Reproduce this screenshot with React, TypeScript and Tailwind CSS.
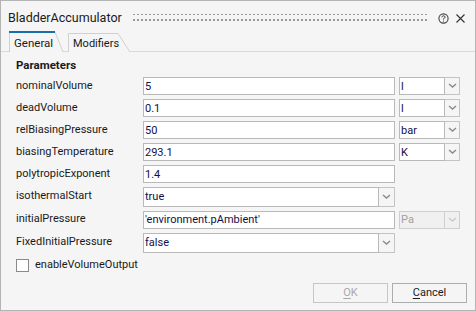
import React from "react";

const Chevron = ({ muted = false }: { muted?: boolean }) => (
  <svg width="9" height="6" viewBox="0 0 9 6" className="block">
    <path
      d="M1 1 L4.5 4 L8 1"
      fill="none"
      stroke={muted ? "#c8c8c8" : "#8a8a8a"}
      strokeWidth="1.4"
    />
  </svg>
);

const TextBox = ({ value }: { value: string }) => (
  <div className="w-[252px] h-[18px] border border-[#b9b9b9] bg-white flex items-center pl-[1px] text-[#10104a] leading-none">
    {value}
  </div>
);

const Unit = ({ value, disabled = false }: { value: string; disabled?: boolean }) => (
  <div className="ml-[4px] flex h-[18px]">
    <div
      className={
        disabled
          ? "w-[46px] border border-[#cfcfcf] bg-[#f0f0f0] text-[#a0a0a0] flex items-center pl-[1px] leading-none"
          : "w-[46px] border border-[#b9b9b9] bg-white text-[#10104a] flex items-center pl-[1px] leading-none"
      }
    >
      {value}
    </div>
    <div
      className={
        disabled
          ? "w-[15px] border border-l-0 border-[#cfcfcf] bg-[#f0f0f0] flex items-center justify-center"
          : "w-[15px] border border-l-0 border-[#c4c4c4] bg-[#f5f5f5] flex items-center justify-center"
      }
    >
      <Chevron muted={disabled} />
    </div>
  </div>
);

const Combo = ({ value }: { value: string }) => (
  <div className="flex h-[20px] w-[252px]">
    <div className="flex-1 border border-[#b9b9b9] bg-white flex items-center pl-[1px] text-[#10104a] leading-none">
      {value}
    </div>
    <div className="w-[16px] border border-l-0 border-[#c4c4c4] bg-[#f5f5f5] flex items-center justify-center">
      <Chevron />
    </div>
  </div>
);

const Row = ({
  label,
  children,
  tall = false,
}: {
  label: string;
  children: React.ReactNode;
  tall?: boolean;
}) => (
  <div className={tall ? "flex items-center h-[23px]" : "flex items-center h-[22px]"}>
    <div className="w-[127px] text-[#1a1a1a]">{label}</div>
    {children}
  </div>
);

export default function App() {
  return (
    <div className="w-[476px] h-[311px] border border-[#b4b4b4] bg-[#f5f5f5] flex flex-col text-[11px] font-['Roboto','Noto_Sans',sans-serif] select-none overflow-hidden">
      {/* title bar */}
      <div className="h-[30px] flex items-center pl-[7px] pr-[9px] shrink-0">
        <span className="text-[12.5px] text-[#1a1a1a] pt-[4px] w-[112px]">BladderAccumulator</span>
        <svg width="296" height="10" className="ml-[13px] mt-[4px] shrink-0">
          <defs>
            <pattern id="grip" width="4" height="6" patternUnits="userSpaceOnUse">
              <rect x="0" y="0" width="2" height="2" fill="#9a9a9a" />
            </pattern>
          </defs>
          <rect x="0" y="1" width="296" height="8" fill="url(#grip)" />
        </svg>
        <div className="ml-auto flex items-center gap-[6px] pt-[4px]">
          <svg width="11" height="11" viewBox="0 0 11 11">
            <circle cx="5.5" cy="5.5" r="4.6" fill="none" stroke="#444" strokeWidth="1.1" />
            <path d="M3.9 4.3 Q3.9 2.8 5.5 2.8 Q7.1 2.8 7.1 4.2 Q7.1 5.1 5.5 5.6 L5.5 6.6" fill="none" stroke="#444" strokeWidth="1" />
            <circle cx="5.5" cy="8.1" r="0.6" fill="#444" />
          </svg>
          <svg width="11" height="11" viewBox="0 0 11 11">
            <path d="M1.5 1.5 L9.5 9.5 M9.5 1.5 L1.5 9.5" stroke="#333" strokeWidth="1.1" />
          </svg>
        </div>
      </div>

      {/* tabs */}
      <div className="h-[21px] flex items-end shrink-0 relative">
        <div className="absolute left-0 right-0 bottom-0 h-px bg-[#d9d9d9]" />
        <div className="relative ml-[8px] h-[21px] w-[55px] z-10">
          <svg width="55" height="21" className="absolute inset-0">
            <path d="M0.5 21 L0.5 1 L46 1 L54 21" fill="#f5f5f5" stroke="#d0d0d0" />
            <rect x="0" y="0" width="46" height="2" fill="#1a6ea8" />
          </svg>
          <span className="relative block pl-[5px] pt-[4px] text-[11.5px] text-[#1a1a1a]">General</span>
        </div>
        <div className="relative ml-[4px] h-[19px] w-[64px]">
          <svg width="64" height="19" className="absolute inset-0">
            <path d="M0.5 19 L0.5 0.5 L50 0.5 L62 19" fill="#f5f5f5" stroke="#d0d0d0" />
          </svg>
          <span className="relative block pl-[5px] pt-[3px] text-[11px] text-[#1a1a1a]">Modifiers</span>
        </div>
      </div>

      {/* content */}
      <div className="flex-1 flex flex-col pl-[15px]">
        <div className="h-[22px] flex items-end font-bold text-[#1a1a1a] text-[11.5px]">Parameters</div>
        <div className="h-[1px]" />
        <Row label="nominalVolume">
          <TextBox value="5" />
          <Unit value="l" />
        </Row>
        <Row label="deadVolume">
          <TextBox value="0.1" />
          <Unit value="l" />
        </Row>
        <Row label="relBiasingPressure">
          <TextBox value="50" />
          <Unit value="bar" />
        </Row>
        <Row label="biasingTemperature">
          <TextBox value="293.1" />
          <Unit value="K" />
        </Row>
        <Row label="polytropicExponent">
          <TextBox value="1.4" />
        </Row>
        <Row label="isothermalStart" tall>
          <Combo value="true" />
        </Row>
        <Row label="initialPressure" tall>
          <TextBox value="'environment.pAmbient'" />
          <Unit value="Pa" disabled />
        </Row>
        <Row label="FixedInitialPressure" tall>
          <Combo value="false" />
        </Row>
        <div className="flex items-center h-[22px]">
          <div className="w-[13px] h-[13px] border border-[#8a8a8a] bg-white" />
          <span className="ml-[6px] text-[#1a1a1a]">enableVolumeOutput</span>
        </div>
        <div className="flex justify-end pr-[8px] mt-[7px] gap-[4px]">
          <div className="w-[75px] h-[20px] border border-[#c6c6c6] bg-[#f5f5f5] flex items-center justify-center text-[#a8a8a8]">
            <span className="underline underline-offset-2">O</span>K
          </div>
          <div className="w-[75px] h-[20px] border border-[#adadad] bg-[#f5f5f5] flex items-center justify-center text-[#1a1a1a]">
            <span className="underline underline-offset-2">C</span>ancel
          </div>
        </div>
      </div>
    </div>
  );
}
